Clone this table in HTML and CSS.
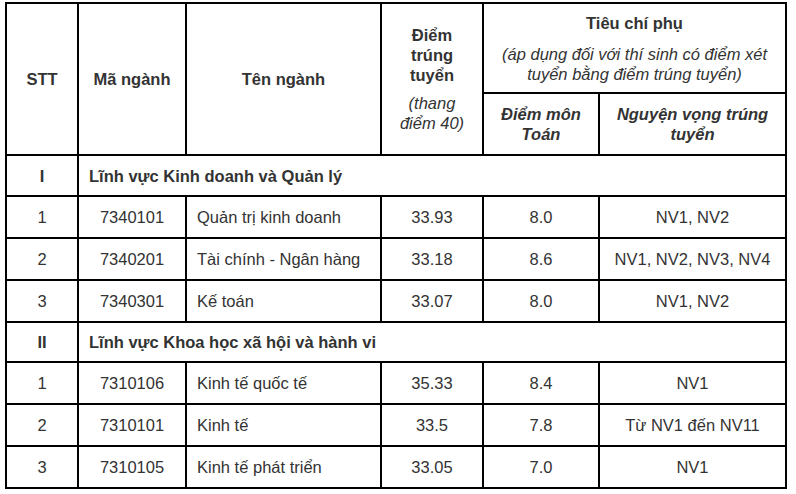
FILE: index.html
```html
<!DOCTYPE html>
<html lang="vi">
<head>
<meta charset="utf-8">
<title>Điểm trúng tuyển</title>
<link rel="stylesheet" href="styles.css">
</head>
<body>
<table class="scores">
  <colgroup>
    <col class="c-stt"><col class="c-code"><col class="c-name"><col class="c-score"><col class="c-math"><col class="c-nv">
  </colgroup>
  <thead>
    <tr class="h1">
      <th rowspan="2">STT</th>
      <th rowspan="2">Mã ngành</th>
      <th rowspan="2">Tên ngành</th>
      <th rowspan="2" class="score-head">
        <p class="strong">Điểm trúng tuyển</p>
        <p class="note">(thang điểm 40)</p>
      </th>
      <th colspan="2" class="crit-head">
        <p class="strong">Tiêu chí phụ</p>
        <p class="note">(áp dụng đối với thí sinh có điểm xét tuyển bằng điểm trúng tuyển)</p>
      </th>
    </tr>
    <tr class="h2">
      <th class="bi">Điểm môn Toán</th>
      <th class="bi">Nguyện vọng trúng tuyển</th>
    </tr>
  </thead>
  <tbody>
    <tr class="section">
      <td class="ctr">I</td>
      <td colspan="5" class="left">Lĩnh vực Kinh doanh và Quản lý</td>
    </tr>
    <tr class="row"><td>1</td><td>7340101</td><td class="left">Quản trị kinh doanh</td><td>33.93</td><td>8.0</td><td>NV1, NV2</td></tr>
    <tr class="row"><td>2</td><td>7340201</td><td class="left">Tài chính - Ngân hàng</td><td>33.18</td><td>8.6</td><td>NV1, NV2, NV3, NV4</td></tr>
    <tr class="row"><td>3</td><td>7340301</td><td class="left">Kế toán</td><td>33.07</td><td>8.0</td><td>NV1, NV2</td></tr>
    <tr class="section s2">
      <td class="ctr">II</td>
      <td colspan="5" class="left">Lĩnh vực Khoa học xã hội và hành vi</td>
    </tr>
    <tr class="row"><td>1</td><td>7310106</td><td class="left">Kinh tế quốc tế</td><td>35.33</td><td>8.4</td><td>NV1</td></tr>
    <tr class="row"><td>2</td><td>7310101</td><td class="left">Kinh tế</td><td>33.5</td><td>7.8</td><td>Từ NV1 đến NV11</td></tr>
    <tr class="row"><td>3</td><td>7310105</td><td class="left">Kinh tế phát triển</td><td>33.05</td><td>7.0</td><td>NV1</td></tr>
  </tbody>
</table>
</body>
</html>
```
FILE: styles.css
```css
html, body {
  margin: 0;
  padding: 0;
  background: #fff;
}

body {
  font-family: "Liberation Sans", Arial, sans-serif;
  font-size: 16.5px;
  line-height: 20px;
  color: #333;
}

.scores {
  margin: 2px 0 0 5px;
  width: 780px;
  table-layout: fixed;
  border-collapse: collapse;
  border: 2px solid #000;
}

.c-stt { width: 72px; }
.c-code { width: 108px; }
.c-name { width: 195px; }
.c-score { width: 102px; }
.c-math { width: 116px; }
.c-nv { width: 187px; }

.scores th,
.scores td {
  border: 2px solid #000;
  padding: 0 6px;
  text-align: center;
  vertical-align: middle;
}

.scores th {
  font-weight: bold;
}

.scores p {
  margin: 0;
}

.h1 { height: 90px; }
.h2 { height: 62px; }

.scores th.score-head {
  padding: 0 13px;
}

.score-head .note {
  margin-top: 8px;
}

.crit-head .strong {
  margin-bottom: 11px;
}

.note {
  font-weight: normal;
  font-style: italic;
}

.bi {
  font-style: italic;
}

.section { height: 41px; }
.section.s2 { height: 40px; }
.section td { font-weight: bold; }

.row { height: 42px; }

.scores td.left {
  text-align: left;
  padding-left: 10px;
}
```
